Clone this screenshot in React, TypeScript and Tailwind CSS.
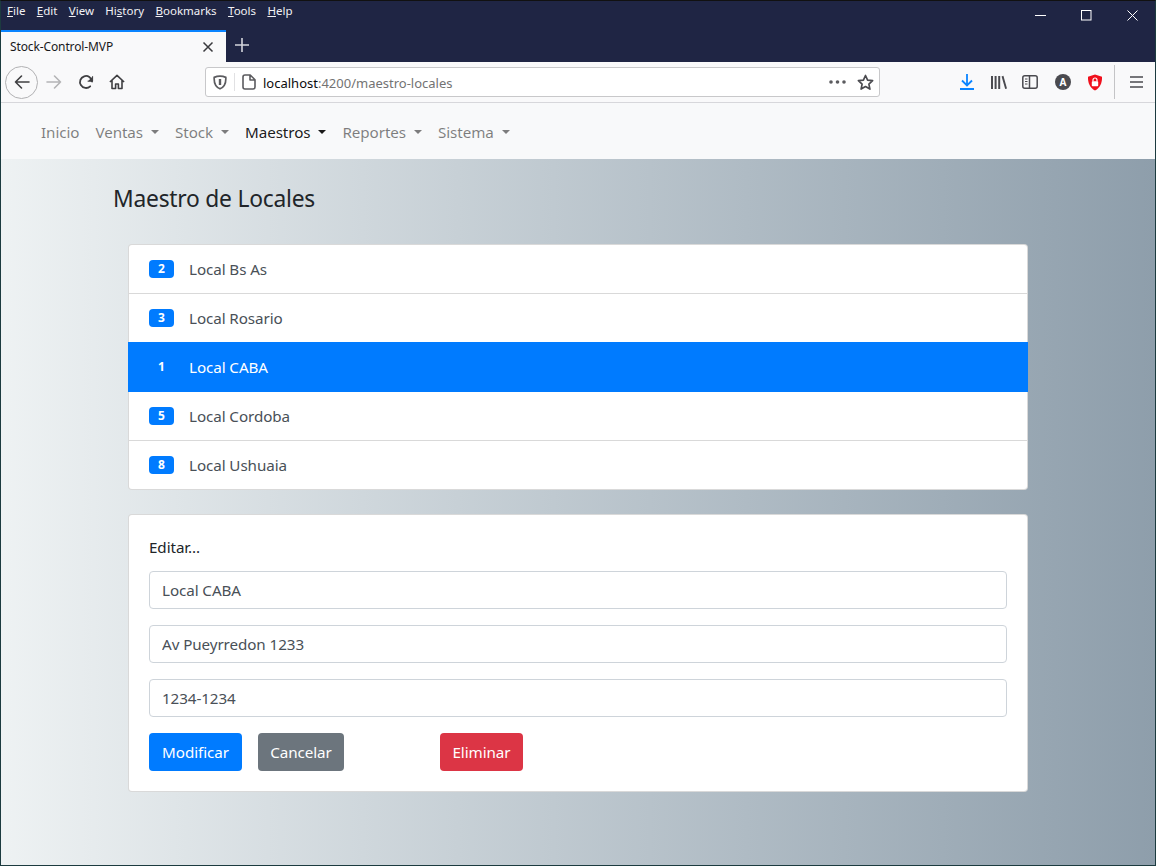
import React from "react";

const FONT = "font-['Noto_Sans','Open_Sans',sans-serif]";

const menus = [
  { pre: "", key: "F", post: "ile" },
  { pre: "", key: "E", post: "dit" },
  { pre: "", key: "V", post: "iew" },
  { pre: "Hi", key: "s", post: "tory" },
  { pre: "", key: "B", post: "ookmarks" },
  { pre: "", key: "T", post: "ools" },
  { pre: "", key: "H", post: "elp" },
];

const navItems = [
  { label: "Inicio", caret: false, active: false },
  { label: "Ventas", caret: true, active: false },
  { label: "Stock", caret: true, active: false },
  { label: "Maestros", caret: true, active: true },
  { label: "Reportes", caret: true, active: false },
  { label: "Sistema", caret: true, active: false },
];

const locales = [
  { id: 2, name: "Local Bs As", alto: "h-[48px]" },
  { id: 3, name: "Local Rosario", alto: "h-[49px] border-t border-black/15" },
  { id: 1, name: "Local CABA", alto: "h-[50px] bg-[#007bff] text-white -mx-px", selected: true },
  { id: 5, name: "Local Cordoba", alto: "h-[48px]" },
  { id: 8, name: "Local Ushuaia", alto: "h-[49px] border-t border-black/15" },
];

const campos = ["Local CABA", "Av Pueyrredon 1233", "1234-1234"];

const TitleBar = () => (
  <div className="h-[61px] bg-[#1f2544] shrink-0 relative">
    <div className="h-[29px] flex items-start pl-[6px] pt-[2px] gap-[11.4px] text-[11.5px] leading-[16px] text-[#f2f2f5]">
      {menus.map((m) => (
        <span key={m.key}>
          {m.pre}
          <u>{m.key}</u>
          {m.post}
        </span>
      ))}
    </div>
    <div className="h-[32px] flex items-stretch">
      <div className="w-[225px] bg-[#f9f9fa] border-t-2 border-[#0a84ff] flex items-center justify-between pl-[9px] pr-[12px] pb-[1px] text-[12px] tracking-[-0.01em] text-[#18181b]">
        <span>Stock-Control-MVP</span>
        <svg width="12" height="12" viewBox="0 0 12 12" fill="none" stroke="#3a3a3e" strokeWidth="1.5">
          <path d="M1.500 1.500l9 9M10.500 1.500l-9 9" />
        </svg>
      </div>
      <div className="w-[32px] flex items-center justify-center pb-[2px]">
        <svg width="14" height="14" viewBox="0 0 14 14" stroke="#d4d5dc" strokeWidth="1.6">
          <path d="M7 0v14M0 7h14" />
        </svg>
      </div>
    </div>
    {/* window controls */}
    <div className="absolute right-0 top-0 h-[29px] flex items-center">
      <div className="w-[46px] flex justify-center">
        <svg width="11" height="11" viewBox="0 0 11 11" stroke="#fff" fill="none"><path d="M0 5.500h11" /></svg>
      </div>
      <div className="w-[46px] flex justify-center">
        <svg width="11" height="11" viewBox="0 0 11 11" stroke="#fff" fill="none"><rect x=".5" y=".5" width="9.500" height="9.500" /></svg>
      </div>
      <div className="w-[46px] flex justify-center">
        <svg width="11" height="11" viewBox="0 0 11 11" stroke="#fff" fill="none"><path d="M.5.5l10 10M10.500.5l-10 10" /></svg>
      </div>
    </div>
  </div>
);

const Toolbar = () => (
  <div className="h-[41px] shrink-0 bg-[#f9f9fa] border-b border-[#d7d7db] flex items-center text-[#3f3f42]">
    <div className="ml-[4px] w-[33px] h-[33px] rounded-full border border-[#b1b1b3] flex items-center justify-center">
      <svg width="16" height="16" viewBox="0 0 16 16" fill="none" stroke="#3f3f42" strokeWidth="1.6" strokeLinecap="round" strokeLinejoin="round">
        <path d="M15 8H1.500M7.500 2L1.500 8l6 6" />
      </svg>
    </div>
    <div className="ml-[8px] w-[16px] flex">
      <svg width="16" height="16" viewBox="0 0 16 16" fill="none" stroke="#b4b4b6" strokeWidth="1.6" strokeLinecap="round" strokeLinejoin="round">
        <path d="M1 8h13.500M8.500 2l6 6-6 6" />
      </svg>
    </div>
    <div className="ml-[16px] w-[16px] flex">
      <svg width="16" height="16" viewBox="0 0 16 16" fill="none" stroke="#3f3f42" strokeWidth="1.8" strokeLinecap="round" strokeLinejoin="round">
        <path d="M14 7.500A6 6 0 1 0 12.200 12.300" />
        <path d="M14.600 2.600v4.600H10" fill="#3f3f42" strokeWidth="1" />
      </svg>
    </div>
    <div className="ml-[15px] w-[16px] flex">
      <svg width="16" height="16" viewBox="0 0 16 16" fill="none" stroke="#3f3f42" strokeWidth="1.6" strokeLinejoin="round">
        <path d="M.9 8L8 1.300 15.100 8M3 6.400V14.500h3.600V10h2.800v4.500H13V6.400" />
      </svg>
    </div>
    <div className="ml-[80px] w-[675px] h-[30px] bg-white border border-[#c8c8ca] rounded-[3px] flex items-center text-[13px]">
      <div className="w-[28px] flex justify-center">
        <svg width="14" height="15" viewBox="0 0 14 15" fill="none" stroke="#5b5b5f" strokeWidth="1.7">
          <path d="M1.200 2.400C3 1.600 5 1.200 7 1.200s4 .4 5.800 1.200c.3 5-1.400 9.600-5.800 11.400C2.600 12 .9 7.400 1.200 2.400z" />
          <path d="M7 4v6" strokeWidth="2.4" />
        </svg>
      </div>
      <div className="w-px h-[18px] bg-[#e1e1e3]" />
      <div className="w-[28px] flex justify-center">
        <svg width="14" height="16" viewBox="0 0 14 16" fill="none" stroke="#5b5b5f" strokeWidth="1.6" strokeLinejoin="round">
          <path d="M3 1h5.200L13 5.800V13a2 2 0 0 1-2 2H3a2 2 0 0 1-2-2V3a2 2 0 0 1 2-2zM8 1v5h5" />
        </svg>
      </div>
      <span className="text-[#0c0c0d] pt-[3px]">localhost</span>
      <span className="text-[#737373] pt-[3px]">:4200/maestro-locales</span>
      <div className="ml-auto flex items-center pr-[5px] gap-[11px]">
        <svg width="17" height="4" viewBox="0 0 17 4" fill="#5b5b5f">
          <circle cx="2" cy="2" r="1.8" />
          <circle cx="8.500" cy="2" r="1.8" />
          <circle cx="15" cy="2" r="1.8" />
        </svg>
        <svg width="17" height="17" viewBox="0 0 17 17" fill="none" stroke="#4a4a4f" strokeWidth="1.7" strokeLinejoin="round">
          <path d="M8.500 1.500l2.100 4.600 5 .6-3.700 3.400 1 5-4.400-2.500-4.400 2.500 1-5L1.400 6.700l5-.6z" />
        </svg>
      </div>
    </div>
    <div className="ml-[80px] w-[16px] flex">
      <svg width="14" height="16" viewBox="0 0 14 16" fill="none" stroke="#0a84ff" strokeWidth="1.8">
        <path d="M7 0v11M2 6.500l5 5 5-5M0 15h14" />
      </svg>
    </div>
    <div className="ml-[15px] w-[16px] flex">
      <svg width="16" height="15" viewBox="0 0 16 15" fill="#4a4a4f">
        <path d="M0 1h2v13H0zM3.600 1h2v13h-2zM7.200 1h2v13h-2zM10.600 1.400l1.800-.6 3.600 12.700-1.800.6z" />
      </svg>
    </div>
    <div className="ml-[15px] w-[16px] flex">
      <svg width="16" height="14" viewBox="0 0 16 14" fill="none" stroke="#4a4a4f" strokeWidth="1.5">
        <rect x=".8" y=".8" width="14.400" height="12.400" rx="2" />
        <path d="M7.500 1v12" />
        <path d="M3 4h2.500M3 6.500h2.500M3 9h2.500" strokeWidth="1" />
      </svg>
    </div>
    <div className="ml-[17px] w-[16px] h-[16px] rounded-full bg-[#4a4a4f] flex items-center justify-center text-white text-[10px] font-bold leading-none">
      A
    </div>
    <div className="ml-[16px] w-[16px] flex">
      <svg width="16" height="17" viewBox="0 0 16 17">
        <path d="M8 .5l7 2.200c.3 6-1.800 11-7 13.800C2.800 13.700.7 8.700 1 2.700z" fill="#f0101c" />
        <rect x="4.800" y="7.200" width="6.400" height="5" rx=".8" fill="#fff" />
        <path d="M6 7.500V6a2 2 0 0 1 4 0v1.500" fill="none" stroke="#fff" strokeWidth="1.200" />
      </svg>
    </div>
    <div className="ml-[11px] w-px h-[34px] bg-[#c4c4c6]" />
    <div className="ml-[15px] w-[13px] flex">
      <svg width="13" height="12" viewBox="0 0 13 12" stroke="#4a4a4f" strokeWidth="1.600">
        <path d="M0 1h13M0 6h13M0 11h13" />
      </svg>
    </div>
  </div>
);

const NavBar = () => (
  <nav className="h-[56px] shrink-0 bg-[#f8f9fa] flex items-center pl-[32px] pt-[2px] text-[15.2px] tracking-[-0.005em]">
    {navItems.map((item) => (
      <div
        key={item.label}
        className={`px-[8px] flex items-center ${item.active ? "text-black/90" : "text-black/50"}`}
      >
        {item.label}
        {item.caret && (
          <span className="ml-[8px] w-0 h-0 border-x-[4.8px] border-x-transparent border-t-[4.8px] border-t-current" />
        )}
      </div>
    ))}
  </nav>
);

const ListaLocales = () => (
  <ul className="mt-[31px] mx-[127px] bg-white border border-black/15 rounded-[4px]">
    {locales.map((l) => (
      <li key={l.id} className={`flex items-center pl-[20px] text-[#495057] ${l.alto}`}>
        <span
          className={`w-[25px] h-[18px] rounded-[4px] flex items-center justify-center text-[12px] font-bold text-white leading-none ${
            l.selected ? "ml-px" : "bg-[#007bff]"
          }`}
        >
          {l.id}
        </span>
        <span className="ml-[15px]">{l.name}</span>
      </li>
    ))}
  </ul>
);

const FormEditar = () => (
  <div className="mt-[24px] mx-[127px] bg-white border border-black/15 rounded-[4px] px-[20px] pt-[20px] pb-[20px]">
    <div className="text-[#212529] leading-[24px] h-[36px]">Editar...</div>
    {campos.map((c) => (
      <input
        key={c}
        readOnly
        value={c}
        className="block w-full h-[38px] mb-[16px] px-[12px] bg-white border border-[#ced4da] rounded-[4px] text-[#495057] outline-none"
      />
    ))}
    <div className="flex">
      <button className="h-[38px] w-[93px] bg-[#007bff] text-white rounded-[4px]">Modificar</button>
      <button className="h-[38px] w-[86px] ml-[16px] bg-[#6c757d] text-white rounded-[4px]">Cancelar</button>
      <button className="h-[38px] w-[83px] ml-[96px] bg-[#dc3545] text-white rounded-[4px]">Eliminar</button>
    </div>
  </div>
);

export default function App() {
  return (
    <div className={`w-[1156px] h-[866px] overflow-hidden flex flex-col border border-[#1c3b3f] border-t-[#111] ${FONT}`}>
      <TitleBar />
      <Toolbar />
      <NavBar />
      <main className="flex-1 bg-gradient-to-r from-[#eef2f3] to-[#8e9eab] text-[15.2px] tracking-[-0.005em]">
        <h4 className="mt-[25px] ml-[112px] text-[22.8px] tracking-[-0.01em] leading-[29px] text-[#212529]">Maestro de Locales</h4>
        <ListaLocales />
        <FormEditar />
      </main>
    </div>
  );
}
